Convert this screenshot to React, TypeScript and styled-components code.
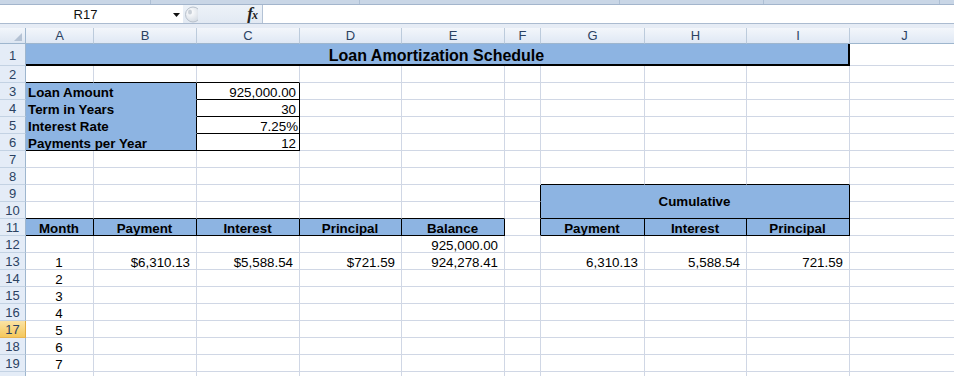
import React from "react";
import styled, { createGlobalStyle } from "styled-components";

const GRID = "#d0d7e5";
const BLUE = "#8db4e2";
const HEAD_TEXT = "#2b4262";

const GlobalStyle = createGlobalStyle`
  html, body {
    margin: 0;
    padding: 0;
    background: #fff;
  }
  body {
    font-family: "Liberation Sans", Arial, sans-serif;
    overflow: hidden;
  }
`;

const Window = styled.div`
  width: 954px;
  height: 376px;
  overflow: hidden;
  background: #fff;
`;

/* ---------- ribbon edge + formula bar ---------- */

const RibbonEdge = styled.div`
  display: flex;
  height: 4px;
  background: #c9d6e6;
  border-bottom: 1px solid #a3b5cc;
`;

const RibbonGroup = styled.div<{ $w: number }>`
  width: ${({ $w }) => $w}px;
  border-right: 1px solid #aebfd4;
`;

const FormulaBar = styled.div`
  display: flex;
  height: 18px;
  background: linear-gradient(#edf2f8, #e2e9f3);
  border-bottom: 1px solid #abbbd0;
`;

const NameBox = styled.div`
  width: 183px;
  display: flex;
  align-items: center;
  background: #fff;
  font-size: 13px;
  color: #111;
`;

const NameText = styled.div`
  flex: 1;
  text-align: center;
  padding-left: 2px;
`;

const DropArrow = styled.div`
  width: 14px;
  display: flex;
  align-items: center;
  justify-content: center;
  padding-top: 1px;
`;

const Handle = styled.div`
  width: 18px;
  display: flex;
  align-items: center;
  padding-left: 1px;
`;

const FxBox = styled.div`
  width: 55px;
  display: flex;
  align-items: center;
  justify-content: flex-end;
  padding-right: 5px;
  border-right: 1px solid #b3c2d5;
`;

const Fx = styled.span`
  font-family: "Liberation Serif", "Times New Roman", serif;
  font-style: italic;
  font-weight: bold;
  font-size: 17px;
  line-height: 16px;
  color: #222;
  letter-spacing: -1px;

  small {
    font-size: 12px;
  }
`;

const FormulaInput = styled.div`
  flex: 1;
  background: #fff;
`;

const Spacer = styled.div`
  height: 4px;
  background: #e6ecf5;
`;

/* ---------- sheet ---------- */

const Sheet = styled.div`
  display: grid;
  grid-template-columns: 26px 68px 103px 103px 102px 103px 36px 104px 102px 103px 110px;
  grid-template-rows: 16px 22px repeat(19, 17px);
`;

const Corner = styled.div`
  box-sizing: border-box;
  display: flex;
  align-items: flex-end;
  justify-content: flex-end;
  padding: 0 3px 2px 0;
  background: linear-gradient(#f2f6fb, #dde6f2);
  border-right: 1px solid #9eb6ce;
  border-bottom: 1px solid #9eb6ce;
`;

const ColHead = styled.div`
  box-sizing: border-box;
  display: flex;
  align-items: center;
  justify-content: center;
  background: linear-gradient(#f3f6fb, #dfe8f4);
  border-right: 1px solid #bccbdc;
  border-bottom: 1px solid #9eb6ce;
  font-size: 13px;
  color: ${HEAD_TEXT};
`;

const RowHead = styled.div<{ $active?: boolean }>`
  box-sizing: border-box;
  display: flex;
  align-items: center;
  justify-content: center;
  padding-top: 1px;
  line-height: 15px;
  background: ${({ $active }) =>
    $active ? "linear-gradient(#fbe3a4, #f5c85c)" : "#e4ecf7"};
  border-right: 1px solid ${({ $active }) => ($active ? "#e2aa40" : "#9eb6ce")};
  border-bottom: 1px solid ${({ $active }) => ($active ? "#e8b552" : "#c3d2e3")};
  font-size: 13px;
  color: ${HEAD_TEXT};
  overflow: hidden;
`;

type CellProps = {
  $fill?: boolean;
  $bold?: boolean;
  $big?: boolean;
  $align?: "left" | "center" | "right";
  $valign?: "end" | "center";
  $span?: number;
  $rowSpan?: number;
  $bottom?: string;
  $right?: string;
  $pr?: number;
};

const Cell = styled.div<CellProps>`
  box-sizing: border-box;
  display: flex;
  align-items: ${({ $valign }) => ($valign === "center" ? "center" : "flex-end")};
  justify-content: ${({ $align }) =>
    $align === "right" ? "flex-end" : $align === "center" ? "center" : "flex-start"};
  padding: 0 ${({ $pr }) => $pr ?? 3}px 0 2px;
  grid-column: span ${({ $span }) => $span ?? 1};
  grid-row: span ${({ $rowSpan }) => $rowSpan ?? 1};
  background: ${({ $fill }) => ($fill ? BLUE : "#fff")};
  border-right: ${({ $right, $fill }) =>
    $right ? `${$right} solid #000` : `1px solid ${$fill ? BLUE : GRID}`};
  border-bottom: ${({ $bottom, $fill }) =>
    $bottom ? `${$bottom} solid #000` : `1px solid ${$fill ? BLUE : GRID}`};
  font-size: ${({ $big }) => ($big ? 16 : 13.33)}px;
  font-weight: ${({ $bold, $big }) => ($bold || $big ? "bold" : "normal")};
  line-height: ${({ $big }) => ($big ? 17 : 13)}px;
  color: #000;
  white-space: nowrap;
  overflow: hidden;
`;

/* ---------- data ---------- */

type Spec = {
  text?: string;
  fill?: boolean;
  bold?: boolean;
  big?: boolean;
  align?: "left" | "center" | "right";
  valign?: "end" | "center";
  span?: number;
  rowSpan?: number;
  bottom?: string;
  right?: string;
  pr?: number;
};

const COLS = ["A", "B", "C", "D", "E", "F", "G", "H", "I", "J"];

function buildRow(cells: Record<string, Spec>, covered: string[] = []): Spec[] {
  const out: Spec[] = [];
  let i = 0;
  while (i < COLS.length) {
    const key = COLS[i];
    if (covered.includes(key)) {
      i++;
      continue;
    }
    const spec = cells[key] ?? {};
    out.push(spec);
    i += spec.span ?? 1;
  }
  return out;
}

const label = (text: string, last = false): Spec => ({
  text,
  fill: true,
  bold: true,
  span: 2,
  right: "1px",
  bottom: last ? "1px" : undefined,
});

const input = (text: string): Spec => ({
  text,
  align: "right",
  right: "1px",
  bottom: "1px",
});

const head = (text: string): Spec => ({
  text,
  fill: true,
  bold: true,
  align: "center",
  right: "1px",
  bottom: "1px",
});

const money = (text: string): Spec => ({ text, align: "right", pr: 6 });

const month = (n: number) => buildRow({ A: { text: String(n), align: "center" } });

const ROWS: Spec[][] = [
  buildRow({
    A: {
      text: "Loan Amortization Schedule",
      fill: true,
      big: true,
      align: "center",
      span: 9,
      bottom: "2px",
      right: "2px",
    },
  }),
  buildRow({ A: { bottom: "1px" }, B: { bottom: "1px" }, C: { bottom: "1px" } }),
  buildRow({ A: label("Loan Amount"), C: input("925,000.00") }),
  buildRow({ A: label("Term in Years"), C: input("30") }),
  buildRow({ A: label("Interest Rate"), C: { ...input("7.25%"), pr: 1 } }),
  buildRow({ A: label("Payments per Year", true), C: input("12") }),
  buildRow({}),
  buildRow({ G: { bottom: "1px" }, H: { bottom: "1px" }, I: { bottom: "1px" } }),
  buildRow({
    F: { right: "1px" },
    G: {
      text: "Cumulative",
      fill: true,
      bold: true,
      align: "center",
      valign: "center",
      span: 3,
      rowSpan: 2,
      right: "1px",
      bottom: "1px",
    },
  }),
  buildRow(
    {
      A: { bottom: "1px" },
      B: { bottom: "1px" },
      C: { bottom: "1px" },
      D: { bottom: "1px" },
      E: { bottom: "1px" },
      F: { right: "1px" },
    },
    ["G", "H", "I"]
  ),
  buildRow({
    A: head("Month"),
    B: head("Payment"),
    C: head("Interest"),
    D: head("Principal"),
    E: head("Balance"),
    F: { right: "1px" },
    G: head("Payment"),
    H: head("Interest"),
    I: head("Principal"),
  }),
  buildRow({ E: money("925,000.00") }),
  buildRow({
    A: { text: "1", align: "center" },
    B: money("$6,310.13"),
    C: money("$5,588.54"),
    D: money("$721.59"),
    E: money("924,278.41"),
    G: money("6,310.13"),
    H: money("5,588.54"),
    I: money("721.59"),
  }),
  month(2),
  month(3),
  month(4),
  month(5),
  month(6),
  month(7),
  buildRow({}),
];

const ACTIVE_ROW = 17;

const CornerMark = () => (
  <svg width="8" height="8" viewBox="0 0 8 8">
    <path d="M8 0 L8 8 L0 8 Z" fill="#b4c2d4" />
  </svg>
);

const ArrowIcon = () => (
  <svg width="7" height="4" viewBox="0 0 7 4">
    <path d="M0 0 H7 L3.5 4 Z" fill="#111" />
  </svg>
);

const HandleIcon = () => (
  <svg width="14" height="17" viewBox="0 0 14 17">
    <defs>
      <radialGradient id="hg" cx="0.35" cy="0.35" r="0.7">
        <stop offset="0" stopColor="#ffffff" />
        <stop offset="1" stopColor="#d3dae3" />
      </radialGradient>
    </defs>
    <circle cx="9" cy="8.5" r="7.5" fill="url(#hg)" stroke="#b8c1cc" />
    <ellipse cx="6" cy="6" rx="2" ry="2.5" fill="#c9d0d8" />
  </svg>
);

const App: React.FC = () => {
  return (
    <Window>
      <GlobalStyle />
      <RibbonEdge>
        <RibbonGroup $w={150} />
        <RibbonGroup $w={208} />
        <RibbonGroup $w={259} />
        <RibbonGroup $w={143} />
        <RibbonGroup $w={175} />
      </RibbonEdge>
      <FormulaBar>
        <NameBox>
          <NameText>R17</NameText>
          <DropArrow>
            <ArrowIcon />
          </DropArrow>
        </NameBox>
        <Handle>
          <HandleIcon />
        </Handle>
        <FxBox>
          <Fx>
            f<small>x</small>
          </Fx>
        </FxBox>
        <FormulaInput />
      </FormulaBar>
      <Spacer />
      <Sheet>
        <Corner>
          <CornerMark />
        </Corner>
        {COLS.map((c) => (
          <ColHead key={c}>{c}</ColHead>
        ))}
        {ROWS.map((cells, r) => (
          <React.Fragment key={r}>
            <RowHead $active={r + 1 === ACTIVE_ROW}>{r + 1 < 20 ? r + 1 : ""}</RowHead>
            {cells.map((s, i) => (
              <Cell
                key={i}
                $fill={s.fill}
                $bold={s.bold}
                $big={s.big}
                $align={s.align}
                $valign={s.valign}
                $span={s.span}
                $rowSpan={s.rowSpan}
                $bottom={s.bottom}
                $right={s.right}
                $pr={s.pr}
              >
                {s.text}
              </Cell>
            ))}
          </React.Fragment>
        ))}
      </Sheet>
    </Window>
  );
};

export default App;
